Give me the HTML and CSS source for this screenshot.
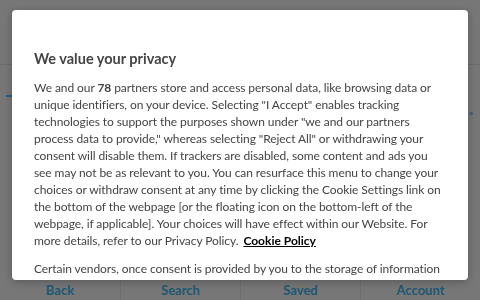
FILE: index.html
```html
<!DOCTYPE html>
<html>
<head>
<meta charset="utf-8">
<link rel="stylesheet" href="styles.css">
</head>
<body>
<div class="page">
  <header class="topbar"></header>
  <main class="content">
    <div class="dash"></div>
    <div class="dot"></div>
  </main>
  <nav class="tabs">
    <a class="tab">Back</a>
    <a class="tab">Search</a>
    <a class="tab">Saved</a>
    <a class="tab">Account</a>
  </nav>
</div>
<div class="modal">
  <h2 class="title">We value your privacy</h2>
  <p class="text">We and our <span class="num">78</span> partners store and access personal data, like browsing data or unique identifiers, on your device. Selecting "I Accept" enables tracking technologies to support the purposes shown under "we and our partners process data to provide," whereas selecting "Reject All" or withdrawing your consent will disable them. If trackers are disabled, some content and ads you see may not be as relevant to you. You can resurface this menu to change your choices or withdraw consent at any time by clicking the Cookie Settings link on the bottom of the webpage [or the floating icon on the bottom-left of the webpage, if applicable]. Your choices will have effect within our Website. For more details, refer to our Privacy Policy. <a class="link">Cookie Policy</a></p>
  <p class="text">Certain vendors, once consent is provided by you to the storage of information on your device, may use precise geolocation data and actively scan device characteristics for identification.</p>
</div>
</body>
</html>
```
FILE: styles.css
```css
html, body {
  margin: 0;
  padding: 0;
  width: 480px;
  height: 300px;
  overflow: hidden;
  background: #777777;
  font-family: Lato, "Open Sans", sans-serif;
}
.page {
  display: flex;
  flex-direction: column;
  height: 300px;
}
.topbar {
  height: 64px;
  border-bottom: 1px solid #6a6a6a;
}
.content {
  flex: 1;
  position: relative;
}
.dash {
  position: absolute;
  left: 6px;
  top: 30px;
  width: 7px;
  height: 2px;
  background: #2a5d86;
}
.dot {
  position: absolute;
  left: 470px;
  top: 47px;
  width: 3px;
  height: 3px;
  border-radius: 50%;
  background: #2a5d86;
}
.tabs {
  height: 34px;
  display: grid;
  grid-template-columns: repeat(4, 1fr);
}
.tab {
  display: flex;
  align-items: flex-end;
  justify-content: center;
  padding-bottom: 2px;
  font-size: 13px;
  font-weight: 700;
  color: #1e5872;
  border-left: 1px solid #6e6e6e;
}
.tab:first-child { border-left: none; }
.modal {
  position: fixed;
  left: 12px;
  top: 10px;
  width: 456px;
  height: 270px;
  background: #ffffff;
  border-radius: 4px;
  box-shadow: 0 2px 8px rgba(0,0,0,0.25);
  overflow: hidden;
  box-sizing: border-box;
  padding: 40px 22px 0 22px;
}
.title {
  margin: 0 0 11px 0;
  font-size: 14.5px;
  font-weight: 700;
  color: #444444;
  line-height: 18px;
}
.text {
  margin: 0 0 11px 0;
  font-size: 12px;
  line-height: 17px;
  letter-spacing: -0.08px;
  color: #444444;
}
.num { font-weight: 700; }
.link {
  font-weight: 700;
  color: #000000;
  text-decoration: underline;
  margin-left: 2px;
  letter-spacing: 0;
}
```
